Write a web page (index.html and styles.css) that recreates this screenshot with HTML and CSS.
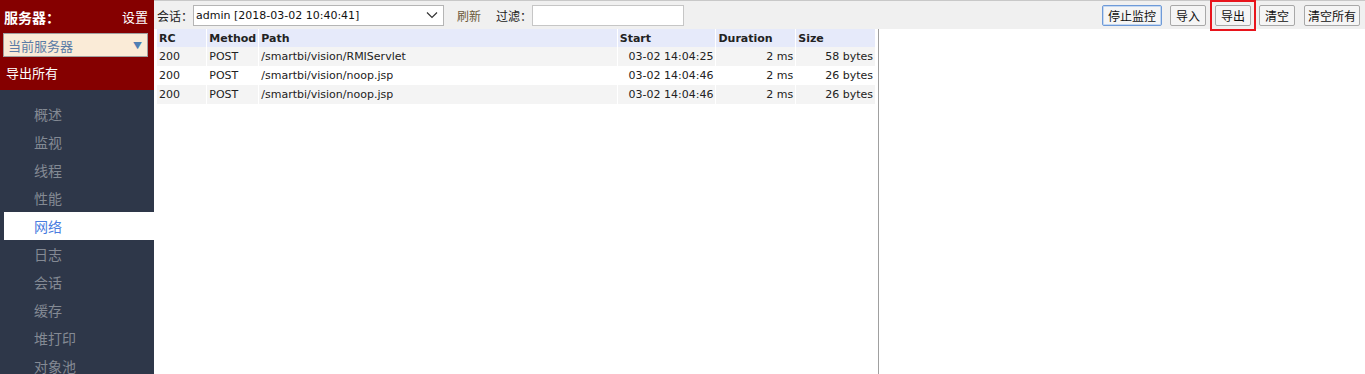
FILE: index.html
```html
<!DOCTYPE html>
<html>
<head>
<meta charset="utf-8">
<link rel="stylesheet" href="styles.css">
</head>
<body>
<div class="app">
  <aside class="sidebar">
    <div class="side-head">
      <div class="side-title"><span class="srv">服务器：</span><span class="cfg">设置</span></div>
      <div class="side-select"><span>当前服务器</span><span class="arrow">▼</span></div>
      <div class="export-all">导出所有</div>
    </div>
    <ul class="menu">
      <li>概述</li>
      <li>监视</li>
      <li>线程</li>
      <li>性能</li>
      <li class="active">网络</li>
      <li>日志</li>
      <li>会话</li>
      <li>缓存</li>
      <li>堆打印</li>
      <li>对象池</li>
    </ul>
  </aside>
  <main class="main">
    <div class="toolbar">
      <span class="lbl">会话：</span>
      <div class="session">
        <span>admin [2018-03-02 10:40:41]</span>
        <svg class="chev" width="12" height="8" viewBox="0 0 12 8"><path d="M1 1.5 L6 6.5 L11 1.5" fill="none" stroke="#333" stroke-width="1.2"/></svg>
      </div>
      <span class="refresh">刷新</span>
      <span class="lbl filter-lbl">过滤：</span>
      <div class="filter"></div>
      <div class="spacer"></div>
      <button class="btn focus">停止监控</button>
      <button class="btn">导入</button>
      <span class="hl"><button class="btn">导出</button></span>
      <button class="btn">清空</button>
      <button class="btn narrow">清空所有</button>
    </div>
    <div class="content">
      <div class="pane">
        <table class="grid">
          <thead>
            <tr><th class="c-rc">RC</th><th class="c-m">Method</th><th class="c-p">Path</th><th class="c-s">Start</th><th class="c-d">Duration</th><th class="c-z">Size</th></tr>
          </thead>
          <tbody>
            <tr class="alt"><td>200</td><td>POST</td><td>/smartbi/vision/RMIServlet</td><td class="r">03-02 14:04:25</td><td class="r">2 ms</td><td class="r">58 bytes</td></tr>
            <tr><td>200</td><td>POST</td><td>/smartbi/vision/noop.jsp</td><td class="r">03-02 14:04:46</td><td class="r">2 ms</td><td class="r">26 bytes</td></tr>
            <tr class="alt"><td>200</td><td>POST</td><td>/smartbi/vision/noop.jsp</td><td class="r">03-02 14:04:46</td><td class="r">2 ms</td><td class="r">26 bytes</td></tr>
          </tbody>
        </table>
      </div>
    </div>
  </main>
</div>
</body>
</html>
```
FILE: styles.css
```css
* { box-sizing: border-box; }
html, body { margin: 0; padding: 0; height: 100%; overflow: hidden; }
body { font-family: "DejaVu Sans", Tahoma, sans-serif; font-size: 12px; color: #222; background: #fff; }
.app { display: flex; height: 374px; }
.sidebar { width: 154px; flex: none; background: #2e3749; display: flex; flex-direction: column; overflow: hidden; }
.side-head { flex: none; background: #850000; height: 90px; padding: 8px 6px 0 3px; color: #fff; }
.side-title { display: flex; justify-content: space-between; align-items: center; height: 18px; font-family: "Noto Sans CJK SC", sans-serif; font-size: 13px; line-height: 18px; }
.srv { font-weight: bold; font-size: 14px; padding-left: 1px; }
.cfg { font-size: 13px; }
.side-select { margin-top: 7px; height: 24px; background: #faebd7; border: 1px solid #a0a0a0; display: flex; justify-content: space-between; align-items: center; padding: 0 5px 0 4px; font-family: "Noto Sans CJK SC", sans-serif; font-size: 13px; color: #5b7ca6; }
.side-select .arrow { font-size: 9px; color: #4f7fb3; }
.export-all { margin-top: 6px; padding-left: 3px; font-family: "Noto Sans CJK SC", sans-serif; font-size: 13px; line-height: 20px; }
.menu { flex: none; list-style: none; margin: 0; padding: 10px 0 0 4px; }
.menu li { height: 28px; line-height: 28px; padding-left: 30px; font-family: "Noto Sans CJK SC", sans-serif; font-size: 14px; color: #848a94; }
.menu li.active { background: #fff; color: #4a7de0; }
.main { flex: 1; display: flex; flex-direction: column; min-width: 0; }
.toolbar { flex: none; height: 29px; background: #f0f0f0; border-top: 1px solid #c8c8c8; display: flex; align-items: center; padding: 0 5px 0 3px; font-family: "Noto Sans CJK SC", sans-serif; font-size: 12px; }
.lbl { color: #222; }
.session { width: 251px; height: 21px; background: #fff; border: 1px solid #b5b5b5; display: flex; align-items: center; justify-content: space-between; padding: 0 5px 0 2px; font-family: "DejaVu Sans", sans-serif; font-size: 11px; color: #111; }
.refresh { margin-left: 13px; color: #6b5a3a; }
.filter-lbl { margin-left: 15px; }
.filter { width: 152px; height: 21px; background: #fff; border: 1px solid #c6c6c6; }
.spacer { flex: 1; }
.btn { height: 21px; padding: 0 5px; margin-left: 8px; background: #f5f5f5; border: 1px solid #a8a8a8; border-radius: 2px; font-family: "Noto Sans CJK SC", sans-serif; font-size: 12px; color: #111; line-height: 19px; }
.btn.narrow { padding: 0 3px; }
.btn.focus { border-color: #6e9ad8; box-shadow: inset 0 0 0 1px #c4d8f2; }
.hl { margin-left: 4px; border: 2px solid #e8141c; padding: 3px; display: flex; }
.hl .btn { margin-left: 0; }
.hl + .btn { margin-left: 3px; }
.hl + .btn + .btn { margin-left: 9px; }
.content { flex: 1; display: flex; }
.pane { width: 725px; border-right: 1px solid #a0a0a0; padding-left: 3px; }
.grid { border-collapse: collapse; width: 719px; font-family: "DejaVu Sans", Tahoma, sans-serif; font-size: 11px; }
.grid th { background: #e6eafa; text-align: left; font-weight: bold; height: 18px; padding: 0 2px; border-right: 1px solid #fff; color: #222; }
.grid td { height: 19px; padding: 0 2px; border-right: 1px solid #fff; color: #222; }
.grid tr.alt td { background: #f4f4f4; }
.grid td.r { text-align: right; }
.c-rc { width: 50px; }
.c-m { width: 50px; }
.c-p { width: 360px; }
.c-s { width: 99px; }
.c-d { width: 80px; }
.c-z { width: 80px; }
```
